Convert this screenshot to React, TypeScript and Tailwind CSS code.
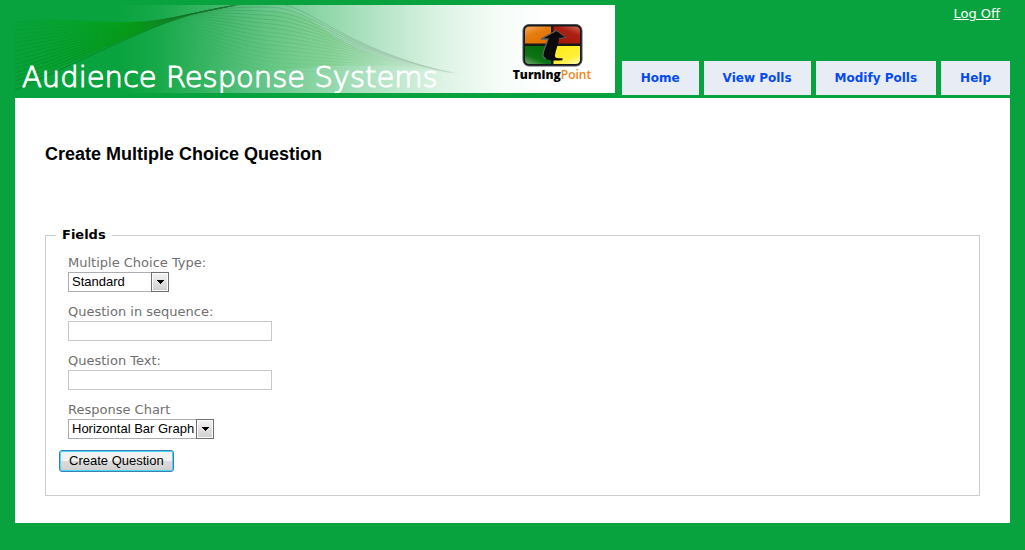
import type { ReactNode } from "react";

type Pt = [number, number];

const mix = (a: Pt, b: Pt, t: number): string =>
  `${(a[0] + (b[0] - a[0]) * t).toFixed(1)} ${(a[1] + (b[1] - a[1]) * t).toFixed(1)}`;

function strand(from: Pt[], to: Pt[], t: number): string {
  const p = from.map((a, i) => mix(a, to[i], t));
  let d = `M${p[0]}`;
  for (let i = 1; i < p.length; i += 3) d += ` C${p[i]} ${p[i + 1]} ${p[i + 2]}`;
  return d;
}

const leftTop: Pt[] = [[0, 8], [45, 10], [80, 17], [110, 17], [140, 17], [162, 12], [182, 8]];
const leftBottom: Pt[] = [[0, 85], [55, 61], [100, 38], [140, 22], [165, 12], [185, 6], [222, 0]];
const rightTop: Pt[] = [[180, 9], [205, 2], [230, -2], [255, -2], [295, -2], [320, 40], [435, 68]];
const rightBottom: Pt[] = [[120, 22], [155, 26], [185, 52], [245, 64], [300, 72], [370, 58], [450, 69]];

const leftSteps = Array.from({ length: 19 }, (_, i) => i / 18);
const rightSteps = Array.from({ length: 17 }, (_, i) => i / 16);

function Waves() {
  return (
    <svg className="absolute inset-0 h-full w-full" viewBox="0 0 600 88" fill="none" aria-hidden="true">
      <defs>
        <linearGradient id="leftInk" gradientUnits="userSpaceOnUse" x1="0" y1="0" x2="215" y2="0">
          <stop offset="0" stopColor="#047f22" />
          <stop offset="0.55" stopColor="#08801c" />
          <stop offset="1" stopColor="#126a2a" />
        </linearGradient>
        <linearGradient id="rightInk" gradientUnits="userSpaceOnUse" x1="130" y1="0" x2="440" y2="0">
          <stop offset="0" stopColor="#128a32" stopOpacity="0" />
          <stop offset="0.3" stopColor="#3a8a4a" stopOpacity="0.6" />
          <stop offset="0.7" stopColor="#709c7c" stopOpacity="0.5" />
          <stop offset="1" stopColor="#9fb8a4" stopOpacity="0.05" />
        </linearGradient>
        <linearGradient id="leftFill" gradientUnits="userSpaceOnUse" x1="0" y1="0" x2="200" y2="0">
          <stop offset="0" stopColor="#02a02a" stopOpacity="0.2" />
          <stop offset="0.6" stopColor="#02a400" stopOpacity="0.7" />
          <stop offset="1" stopColor="#0b8a1c" stopOpacity="0.2" />
        </linearGradient>
        <linearGradient id="rightFill" gradientUnits="userSpaceOnUse" x1="190" y1="0" x2="440" y2="0">
          <stop offset="0" stopColor="#39b54a" stopOpacity="0" />
          <stop offset="0.5" stopColor="#6ccb72" stopOpacity="0.4" />
          <stop offset="1" stopColor="#c5ecc0" stopOpacity="0" />
        </linearGradient>
      </defs>
      <path d="M0 16C45 12 80 18 110 17C140 17 162 12 182 8L130 26L0 80Z" fill="url(#leftFill)" />
      <path d="M150 26C200 20 265 -8 300 18C335 46 380 58 440 69C370 54 290 62 230 68Z" fill="url(#rightFill)" />
      {leftSteps.map((t) => (
        <path
          key={t}
          d={strand(leftTop, leftBottom, t)}
          stroke="url(#leftInk)"
          strokeWidth={t === 1 ? 1.1 : 0.8}
          strokeOpacity={0.04 + 0.65 * t}
        />
      ))}
      {rightSteps.map((t) => (
        <path
          key={t}
          d={strand(rightTop, rightBottom, t)}
          stroke="url(#rightInk)"
          strokeWidth={0.8}
          strokeOpacity={0.9 - 0.75 * t}
        />
      ))}
    </svg>
  );
}

function TurningPointLogo() {
  return (
    <div className="absolute top-4 right-[15px] flex w-24 flex-col items-center">
      <svg className="h-[48px] w-[64px]" viewBox="0 0 64 48" aria-hidden="true">
        <defs>
          <linearGradient id="tpOrange" x1="0" y1="0" x2="0.6" y2="1">
            <stop offset="0" stopColor="#f5ac60" />
            <stop offset="0.45" stopColor="#e67d10" />
            <stop offset="1" stopColor="#df7200" />
          </linearGradient>
          <linearGradient id="tpRed" x1="1" y1="0" x2="0.4" y2="1">
            <stop offset="0" stopColor="#d06a58" />
            <stop offset="0.4" stopColor="#ad2014" />
            <stop offset="1" stopColor="#a3170b" />
          </linearGradient>
          <linearGradient id="tpGreen" x1="0" y1="1" x2="0.6" y2="0">
            <stop offset="0" stopColor="#70ac6c" />
            <stop offset="0.4" stopColor="#0d7416" />
            <stop offset="1" stopColor="#036b0c" />
          </linearGradient>
          <linearGradient id="tpYellow" x1="1" y1="1" x2="0.4" y2="0">
            <stop offset="0" stopColor="#fffbc0" />
            <stop offset="0.4" stopColor="#fff03a" />
            <stop offset="1" stopColor="#fdec1e" />
          </linearGradient>
        </defs>
        <rect x="3" y="3.5" width="59" height="41.5" rx="6" fill="#16181a" stroke="#4c5358" />
        <path d="M5 22.6V10Q5 5.5 9.5 5.5H31V22.6Z" fill="url(#tpOrange)" />
        <path d="M33.5 22.6V5.5H55.5Q60 5.5 60 10V22.6Z" fill="url(#tpRed)" />
        <path d="M5 25V38.5Q5 43 9.5 43H31V25Z" fill="url(#tpGreen)" />
        <path d="M33.5 25V43H55.5Q60 43 60 38.5V25Z" fill="url(#tpYellow)" />
        <path
          d="M36.5 9.500L21 18H28C26.500 24 22.500 30 23 34.500C23.500 38.500 29 40 42.500 39.300V37.200C37 37.500 34.500 37 35 34C35.600 29.500 38.500 23 39 17.500L46 16.500Z"
          fill="#0b0b0c"
        />
        <path
          d="M36.5 9.5L21 18H28C26.5 24 22.5 30 23 34.5C23.2 36 24.5 37.2 26 38"
          fill="none"
          stroke="#5d6266"
          strokeWidth="1.3"
        />
        <path d="M36.5 9.5L46 16.5L39 17.5" fill="none" stroke="#5d6266" strokeWidth="0.9" />
      </svg>
      <p className="-mt-0.5 font-['Open_Sans','Noto_Sans',sans-serif] text-[12px] leading-4 whitespace-nowrap">
        <span className="font-extrabold text-black">Turning</span>
        <span className="font-semibold text-[#f08519]">Point</span>
      </p>
    </div>
  );
}

const tabs = ["Home", "View Polls", "Modify Polls", "Help"];

const boxClass = "block h-5 border border-[#c8c8c8] bg-white font-['Liberation_Sans',Arial,sans-serif] text-[13px] text-black outline-none";

function Field({ id, label, children }: { id: string; label: string; children: ReactNode }) {
  return (
    <div className="mb-[11px] flex flex-col items-start">
      <label htmlFor={id} className="leading-[18px] text-[#6f6f6f]">
        {label}
      </label>
      {children}
    </div>
  );
}

function Dropdown({ id, options, width }: { id: string; options: string[]; width: string }) {
  return (
    <div className={`relative ${width}`}>
      <select
        id={id}
        className="block h-5 w-full appearance-none border border-[#abadb3] bg-white pl-[3px] font-['Liberation_Sans',Arial,sans-serif] text-[13px] leading-[18px] text-black outline-none"
      >
        {options.map((o) => (
          <option key={o}>{o}</option>
        ))}
      </select>
      <span className="pointer-events-none absolute top-0 right-0 flex h-5 w-[18px] items-center justify-center border border-[#707070] bg-linear-to-b from-[#f4f4f4] to-[#cfcfcf] shadow-[inset_0_0_0_1px_#fcfcfc]">
        <svg className="h-1 w-[7px]" viewBox="0 0 7 4" shapeRendering="crispEdges" aria-hidden="true">
          <path d="M0 0H7V1H6V2H5V3H4V4H3V3H2V2H1V1H0Z" fill="#000" />
        </svg>
      </span>
    </div>
  );
}

export default function App() {
  return (
    <div className="min-h-screen bg-[#08a33e] px-[15px] pb-[27px] font-['DejaVu_Sans',Verdana,sans-serif] text-[13px]">
      <header className="flex items-stretch justify-between pt-[5px] pb-[3px]">
        <div className="relative mb-0.5 h-[88px] w-[600px] shrink-0 overflow-hidden bg-[linear-gradient(90deg,#08a33e_17%,#18a94a_24%,#3bb666_33%,#62c488_41%,#8ad4a4_50%,#b2e3c4_60%,#dcf3e4_71%,#f6fcf8_81%,#fff_89%)]">
          <Waves />
          <p className="absolute bottom-0 left-[7px] text-[29px] leading-8 font-extralight whitespace-nowrap text-white [-webkit-text-stroke:1px_white]">
            Audience Response Systems
          </p>
          <TurningPointLogo />
        </div>
        <div className="flex flex-col items-end justify-between">
          <a href="#logoff" className="mr-2.5 leading-[17px] text-white underline">
            Log Off
          </a>
          <nav className="flex gap-[5px]">
            {tabs.map((t) => (
              <a
                key={t}
                href={`#${t.toLowerCase().replace(" ", "-")}`}
                className="flex h-[34px] items-center bg-[#e8edf5] px-[19px] text-[12px] font-bold whitespace-nowrap text-[#034af3]"
              >
                {t}
              </a>
            ))}
          </nav>
        </div>
      </header>
      <main className="bg-white px-[30px] pt-[45px] pb-[27px]">
        <h1 className="font-['Liberation_Sans',Arial,sans-serif] text-[18px] leading-[22px] font-bold text-black">
          Create Multiple Choice Question
        </h1>
        <form className="pt-[61px]" onSubmit={(e) => e.preventDefault()}>
          <fieldset className="border border-[#ccc] px-[13px] pt-[10px] pb-[23px]">
            <legend className="-ml-[3px] px-1.5 leading-[18px] font-bold text-black">Fields</legend>
            <div className="pl-[9px]">
              <Field id="type" label="Multiple Choice Type:">
                <Dropdown id="type" options={["Standard"]} width="w-[101px]" />
              </Field>
              <Field id="sequence" label="Question in sequence:">
                <input id="sequence" type="text" className={`${boxClass} w-[204px] px-1`} />
              </Field>
              <Field id="question" label="Question Text:">
                <input id="question" type="text" className={`${boxClass} w-[204px] px-1`} />
              </Field>
              <Field id="chart" label="Response Chart">
                <Dropdown id="chart" options={["Horizontal Bar Graph"]} width="w-[146px]" />
              </Field>
            </div>
            <button
              type="submit"
              className="h-[22px] rounded-[3px] border border-[#3c7fb1] bg-linear-to-b from-[#f2f2f2] from-50% via-[#dddddd] via-50% to-[#cfcfcf] px-[9px] font-['Liberation_Sans',Arial,sans-serif] text-[13px] leading-[18px] text-black shadow-[inset_0_0_0_1px_#48d8fb]"
            >
              Create Question
            </button>
          </fieldset>
        </form>
      </main>
    </div>
  );
}
